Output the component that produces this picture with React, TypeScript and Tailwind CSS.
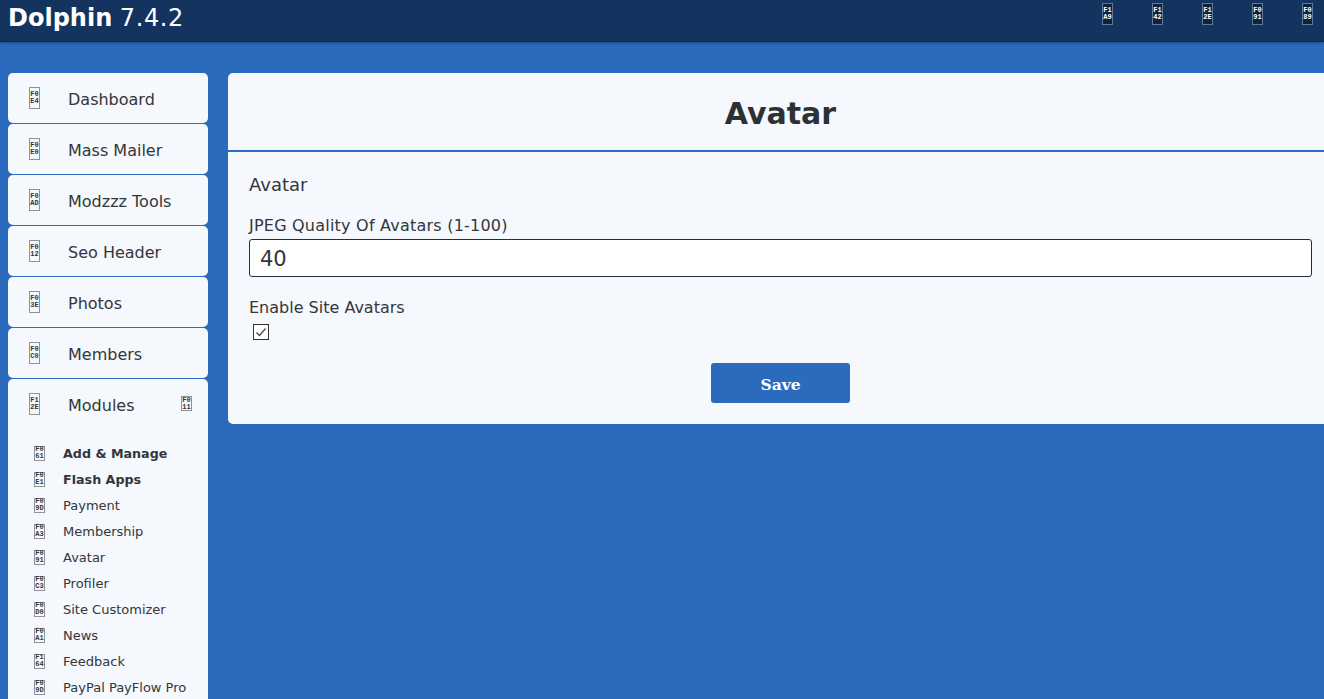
const menu = [
  { title: "Dashboard", code: ["F0", "E4"] },
  { title: "Mass Mailer", code: ["F0", "E0"] },
  { title: "Modzzz Tools", code: ["F0", "AD"] },
  { title: "Seo Header", code: ["F0", "12"] },
  { title: "Photos", code: ["F0", "3E"] },
  { title: "Members", code: ["F0", "C0"] },
]

const subMenu = [
  { title: "Add & Manage", code: ["F0", "61"], bold: true },
  { title: "Flash Apps", code: ["F0", "E1"], bold: true },
  { title: "Payment", code: ["F0", "9D"] },
  { title: "Membership", code: ["F0", "A3"] },
  { title: "Avatar", code: ["F0", "91"] },
  { title: "Profiler", code: ["F0", "C3"] },
  { title: "Site Customizer", code: ["F0", "D0"] },
  { title: "News", code: ["F0", "A1"] },
  { title: "Feedback", code: ["F1", "64"] },
  { title: "PayPal PayFlow Pro", code: ["F0", "9D"] },
]

const topIcons = [
  ["F1", "A9"],
  ["F1", "42"],
  ["F1", "2E"],
  ["F0", "91"],
  ["F0", "89"],
]

// missing-glyph box, the icon font did not load in the original
function Tofu({ code, light, small }: { code: string[]; light?: boolean; small?: boolean }) {
  return (
    <span
      className={`flex w-[11px] shrink-0 flex-col items-center justify-center border font-['Liberation_Mono',monospace] text-[7px] leading-[7px] font-bold ${
        small ? "h-[15px]" : "h-[22px]"
      } ${light ? "border-[#5d7a9c] bg-[#0c2340] text-white" : "border-[#8f9296] text-[#333]"}`}
    >
      <span>{code[0]}</span>
      <span>{code[1]}</span>
    </span>
  )
}

export default function App() {
  return (
    <div className="h-[699px] overflow-hidden bg-[#2a6bbd] font-['DejaVu_Sans',sans-serif] text-[#33363a]">
      <header className="flex h-[42px] justify-between border-b border-[#0d2a4d] bg-[#14345f] pr-[11px] pl-2 shadow-[0_1px_3px_rgba(0,0,0,0.3)]">
        <div className="text-[24px] leading-[37px] text-white">
          <span className="font-bold">Dolphin</span> <span className="tracking-[0.6px]">7.4.2</span>
        </div>
        <div className="flex gap-[39px] pt-[3px]">
          {topIcons.map((code, i) => (
            <Tofu key={i} code={code} light />
          ))}
        </div>
      </header>

      <div className="flex gap-5 pt-[31px] pl-2">
        <aside className="flex w-[200px] shrink-0 flex-col gap-px">
          {menu.map((item) => (
            <div
              key={item.title}
              className="flex h-[50px] items-center rounded-[5px] bg-[#f5f8fd] pl-[21px] text-[16px]"
            >
              <Tofu code={item.code} />
              <span className="ml-[28px] pt-[3px]">{item.title}</span>
            </div>
          ))}
          <div className="rounded-[5px] bg-[#f5f8fd]">
            <div className="flex h-[50px] items-center pr-[16px] pl-[21px] text-[16px]">
              <Tofu code={["F1", "2E"]} />
              <span className="ml-[28px] flex-1 pt-[3px]">Modules</span>
              <span className="-mt-px">
                <Tofu code={["F0", "11"]} small />
              </span>
            </div>
            <div className="pt-[11px] pb-2">
              {subMenu.map((item) => (
                <div key={item.title} className="flex h-[26px] items-center pl-[26px] text-[13px]">
                  <Tofu code={item.code} small />
                  <span className={`ml-[18px] pt-[2px] ${item.bold ? "text-[12.7px] font-bold" : ""}`}>
                    {item.title}
                  </span>
                </div>
              ))}
            </div>
          </div>
        </aside>

        <main className="flex-1">
          <div className="flex h-[77px] items-center justify-center rounded-tl-[5px] bg-[#f5f8fd] pt-[4px] pl-[9px] text-[30px] font-bold text-[#2e3133]">
            Avatar
          </div>
          <div className="mt-px h-[273px] rounded-bl-[5px] border-t border-[#2f76a8] bg-[#f5f8fd] pt-[22px] pr-3 pl-[21px]">
            <div className="text-[18px] leading-[22px]">Avatar</div>
            <div className="mt-[20px] text-[16px] leading-[20px] tracking-[0.22px]">
              JPEG Quality Of Avatars (1-100)
            </div>
            <input
              readOnly
              value="40"
              className="mt-[3px] block h-[38px] w-full rounded-[3px] border border-[#1c2f45] bg-white px-[10px] pt-px text-[21px] text-[#33363a] outline-none"
            />
            <div className="mt-[21px] text-[16px] leading-[20px]">Enable Site Avatars</div>
            <div className="mt-[6px] ml-[4px] flex h-4 w-4 items-center justify-center border border-[#333] bg-white">
              <svg width="12" height="12" viewBox="0 0 12 12" fill="none" stroke="#444" strokeWidth="1.2">
                <path d="M1.5 6.5 L4.5 9.5 L10.5 2.5" />
              </svg>
            </div>
            <div className="mt-[23px] flex justify-center">
              <button className="h-10 w-[139px] rounded-[3px] bg-[#2a6bbd] pt-[3px] font-['DejaVu_Serif',serif] text-[15.5px] font-bold text-white">
                Save
              </button>
            </div>
          </div>
        </main>
      </div>
    </div>
  )
}
